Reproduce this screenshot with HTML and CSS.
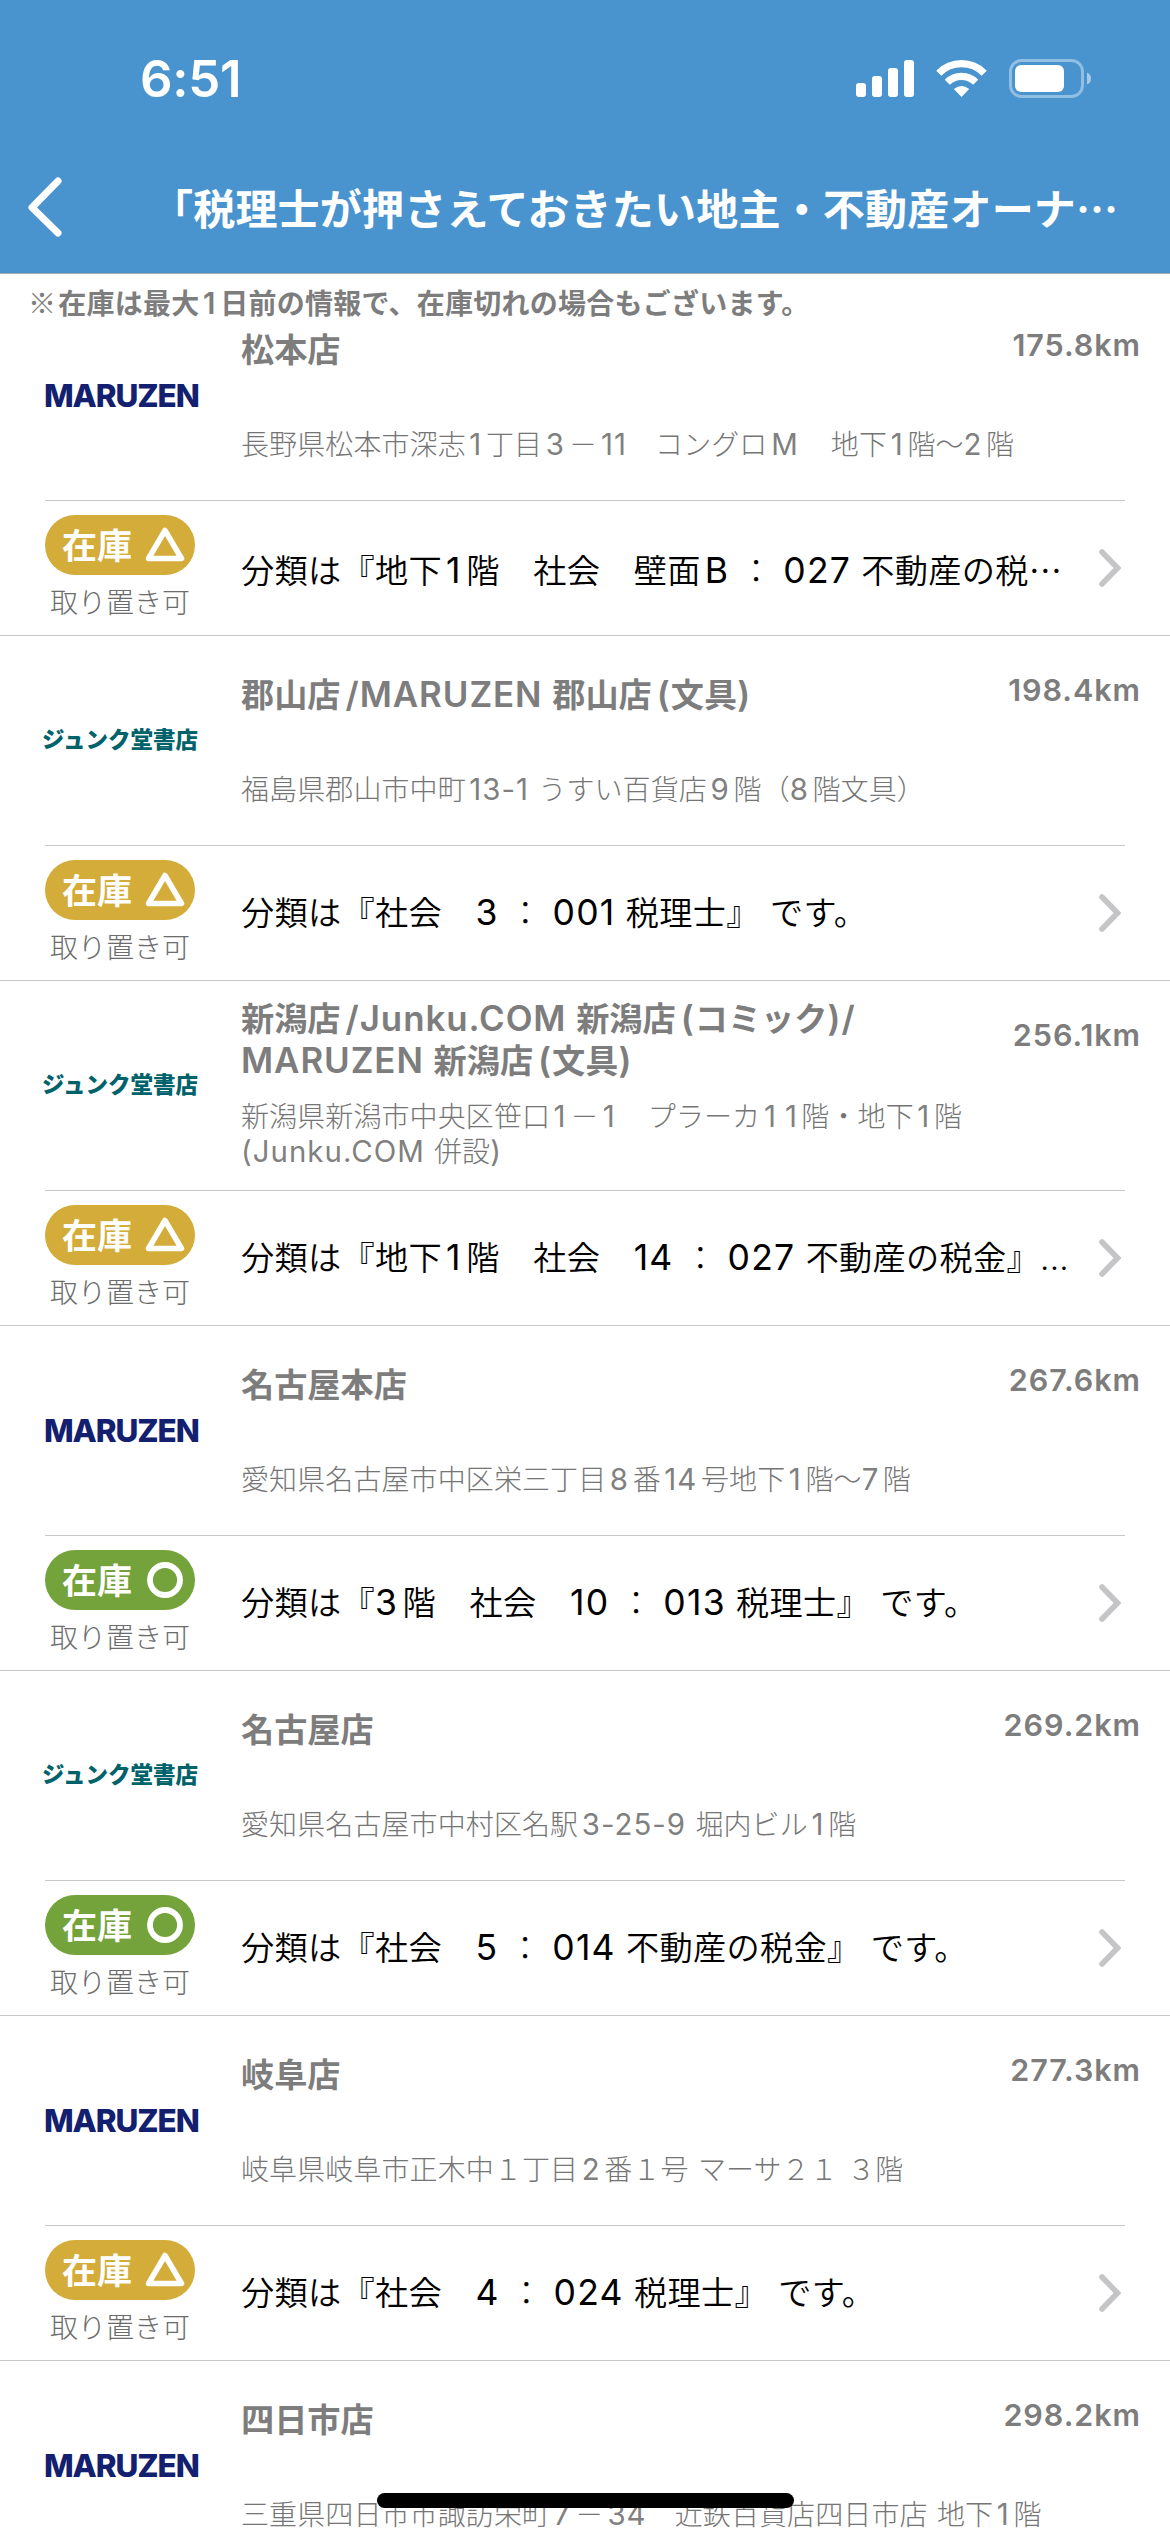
FILE: index.html
```html
<!DOCTYPE html>
<html lang="ja">
<head>
<meta charset="utf-8">
<title>在庫店舗一覧</title>
<link rel="stylesheet" href="styles.css">
</head>
<body>
<svg width="0" height="0" class="defs">
  <symbol id="next" viewBox="0 0 22 38"><path d="M3 3l15.500 16L3 35" fill="none" stroke="#c5c5c7" stroke-width="5.600" stroke-linecap="round" stroke-linejoin="miter"/></symbol>
  <symbol id="tri" viewBox="0 0 40 36"><path d="M20 3.500L36.500 31.500H3.500z" fill="none" stroke="#fff" stroke-width="5.500" stroke-linejoin="round"/></symbol>
  <symbol id="circ" viewBox="0 0 40 36"><circle cx="20" cy="18" r="15" fill="none" stroke="#fff" stroke-width="5.800"/></symbol>
</svg>
<header class="header">
  <div class="status">
    <span class="clock">6:51</span>
    <svg class="indicators" width="236" height="40" viewBox="0 0 236 40" fill="#fff">
      <rect x="0" y="24" width="10" height="14" rx="3"/><rect x="16" y="17" width="10" height="21" rx="3"/><rect x="32" y="9" width="10" height="29" rx="3"/><rect x="48" y="1" width="10" height="37" rx="3"/>
      <g fill="none" stroke="#fff" stroke-width="7.200"><path d="M82.800 14.200a31.800 31.800 0 0 1 45.400 0"/><path d="M91.300 23.300a20.200 20.200 0 0 1 28.400 0"/></g>
      <path d="M105.500 38l-7.700-8q7.700-6 15.400 0z"/>
      <rect x="154.500" y="1.500" width="72" height="36" rx="11" fill="none" stroke="#fff" stroke-opacity=".4" stroke-width="3"/>
      <rect x="159" y="6" width="49" height="27" rx="6"/>
      <path d="M231 13.500q4 1.500 4 6t-4 6z" fill-opacity=".5"/>
    </svg>
  </div>
  <div class="nav">
    <svg class="back" width="36" height="60" viewBox="0 0 36 60"><path d="M31 4L5 30.500L31 56" fill="none" stroke="#fff" stroke-width="7" stroke-linecap="round" stroke-linejoin="round"/></svg>
    <h1 class="title">「税理士が押さえておきたい地主・不動産オーナ<span class="dots">⋯</span></h1>
  </div>
</header>
<p class="note"><span class="kome">※</span>在庫は最大<span class="n">1</span>日前の情報で、在庫切れの場合もございます。</p>
<main class="list">
  <section class="store">
    <div class="info">
      <div class="logo maruzen">MARUZEN</div>
      <div class="texts"><div class="top"><h2 class="name">松本店</h2><span class="km">175.8km</span></div>
      <p class="address">長野県松本市深志<span class="n">1</span>丁目<span class="n">3</span><i></i>－<i></i><span class="n">11</span>　コングロ<span class="n">M</span><i></i>　地下<span class="n">1</span>階〜<span class="n">2</span>階</p></div>
    </div>
    <div class="stock">
      <div class="state"><div class="badge few"><span class="word">在庫</span><svg class="mark"><use href="#tri"/></svg></div><span class="keep">取り置き可</span></div>
      <p class="shelf">分類は『地下<span class="n">1</span>階　社会　壁面<span class="n">B </span><span class="colon">：</span><span class="n"> 027 </span>不動産の税<span class="dots">⋯</span></p><svg class="next"><use href="#next"/></svg>
    </div>
  </section>
  <section class="store">
    <div class="info">
      <div class="logo junku">ジュンク堂書店</div>
      <div class="texts"><div class="top"><h2 class="name">郡山店<i></i><span class="n">/MARUZEN </span>郡山店<i></i><span class="n">(</span>文具<span class="n">)</span></h2><span class="km">198.4km</span></div>
      <p class="address">福島県郡山市中町<span class="n">13-1 </span>うすい百貨店<span class="n">9</span>階（<span class="n">8</span>階文具）</p></div>
    </div>
    <div class="stock">
      <div class="state"><div class="badge few"><span class="word">在庫</span><svg class="mark"><use href="#tri"/></svg></div><span class="keep">取り置き可</span></div>
      <p class="shelf">分類は『社会　<span class="n">3 </span><span class="colon">：</span><span class="n"> 001 </span>税理士』<span class="n"> </span>です。</p><svg class="next"><use href="#next"/></svg>
    </div>
  </section>
  <section class="store double">
    <div class="info">
      <div class="logo junku">ジュンク堂書店</div>
      <div class="texts"><div class="top"><h2 class="name">新潟店<i></i><span class="n">/Junku.COM </span>新潟店<i></i><span class="n">(</span>コミック<span class="n">)/</span><br><span class="n">MARUZEN </span>新潟店<i></i><span class="n">(</span>文具<span class="n">)</span></h2><span class="km">256.1km</span></div>
      <p class="address">新潟県新潟市中央区笹口<span class="n">1</span><i></i>－<i></i><span class="n">1</span><i></i>　プラーカ<span class="n">1<i></i><i></i>1</span>階・地下<span class="n">1</span>階<br><span class="n">(Junku.COM </span>併設<span class="n">)</span></p></div>
    </div>
    <div class="stock">
      <div class="state"><div class="badge few"><span class="word">在庫</span><svg class="mark"><use href="#tri"/></svg></div><span class="keep">取り置き可</span></div>
      <p class="shelf">分類は『地下<span class="n">1</span>階　社会　<span class="n">14 </span><span class="colon">：</span><span class="n"> 027 </span>不動産の税金』...</p><svg class="next"><use href="#next"/></svg>
    </div>
  </section>
  <section class="store">
    <div class="info">
      <div class="logo maruzen">MARUZEN</div>
      <div class="texts"><div class="top"><h2 class="name">名古屋本店</h2><span class="km">267.6km</span></div>
      <p class="address">愛知県名古屋市中区栄三丁目<span class="n">8</span>番<span class="n">14</span>号地下<span class="n">1</span>階〜<span class="n">7</span>階</p></div>
    </div>
    <div class="stock">
      <div class="state"><div class="badge many"><span class="word">在庫</span><svg class="mark"><use href="#circ"/></svg></div><span class="keep">取り置き可</span></div>
      <p class="shelf">分類は『<span class="n">3</span>階　社会　<span class="n">10 </span><span class="colon">：</span><span class="n"> 013 </span>税理士』<span class="n"> </span>です。</p><svg class="next"><use href="#next"/></svg>
    </div>
  </section>
  <section class="store">
    <div class="info">
      <div class="logo junku">ジュンク堂書店</div>
      <div class="texts"><div class="top"><h2 class="name">名古屋店</h2><span class="km">269.2km</span></div>
      <p class="address">愛知県名古屋市中村区名駅<span class="n">3-25-9 </span>堀内ビル<span class="n">1</span>階</p></div>
    </div>
    <div class="stock">
      <div class="state"><div class="badge many"><span class="word">在庫</span><svg class="mark"><use href="#circ"/></svg></div><span class="keep">取り置き可</span></div>
      <p class="shelf">分類は『社会　<span class="n">5 </span><span class="colon">：</span><span class="n"> 014 </span>不動産の税金』<span class="n"> </span>です。</p><svg class="next"><use href="#next"/></svg>
    </div>
  </section>
  <section class="store">
    <div class="info">
      <div class="logo maruzen">MARUZEN</div>
      <div class="texts"><div class="top"><h2 class="name">岐阜店</h2><span class="km">277.3km</span></div>
      <p class="address">岐阜県岐阜市正木中１丁目<span class="n">2</span>番１号<span class="n"> </span>マーサ２１<span class="n"> </span>３階</p></div>
    </div>
    <div class="stock">
      <div class="state"><div class="badge few"><span class="word">在庫</span><svg class="mark"><use href="#tri"/></svg></div><span class="keep">取り置き可</span></div>
      <p class="shelf">分類は『社会　<span class="n">4 </span><span class="colon">：</span><span class="n"> 024 </span>税理士』<span class="n"> </span>です。</p><svg class="next"><use href="#next"/></svg>
    </div>
  </section>
  <section class="store">
    <div class="info">
      <div class="logo maruzen">MARUZEN</div>
      <div class="texts"><div class="top"><h2 class="name">四日市店</h2><span class="km">298.2km</span></div>
      <p class="address">三重県四日市市諏訪栄町<span class="n">7</span><i></i>－<i></i><span class="n">34</span>　近鉄百貨店四日市店<span class="n"> </span>地下<span class="n">1</span>階</p></div>
    </div>
  </section>
</main>
<div class="home-bar"></div>
</body>
</html>
```
FILE: styles.css
```css
* { box-sizing: border-box; }
body {
  margin: 0;
  width: 1170px;
  height: 2532px;
  overflow: hidden;
  display: flex;
  flex-direction: column;
  background: #fff;
  font-family: Inter, "Noto Sans CJK JP", sans-serif;
  color: #7d7d7d;
  text-autospace: normal;
}
h1, h2, p { margin: 0; white-space: nowrap; }
i { display: inline-block; width: 4px; }
.n { font-size: 1.05em; letter-spacing: 0.035em; line-height: 0; }
.defs { position: absolute; }

.header {
  flex: none;
  height: 274px;
  background: #4994cf;
  border-bottom: 1px solid #a5adb3;
  color: #fff;
}
.status {
  height: 157px;
  padding: 0 78px 0 140px;
  display: flex;
  justify-content: space-between;
  align-items: center;
}
.clock { font-size: 51px; font-weight: 600; line-height: 60px; letter-spacing: -0.3px; }
.nav { height: 99px; display: flex; align-items: center; padding-left: 27px; }
.title {
  margin-left: 88px;
  padding-top: 4px;
  font-size: 42px;
  font-weight: 700;
  line-height: 60px;
  letter-spacing: 0.2px;
}
.dots { font-family: "Noto Sans CJK JP", sans-serif; }

.note {
  position: relative;
  z-index: 1;
  flex: none;
  height: 57px;
  padding: 0 28px;
  background: #fff;
  font-size: 28px;
  font-weight: 600;
  line-height: 57px;
  letter-spacing: 0.25px;
}
.kome { font-family: "Noto Sans CJK JP", sans-serif; font-weight: 400; margin-right: 2px; }

.list { flex: 1; min-height: 0; margin-top: -40px; overflow: hidden; }
.store { height: 345px; border-bottom: 1px solid #c8c7cc; }
.info {
  height: 210px;
  margin: 0 45px;
  border-bottom: 1px solid #c8c7cc;
  display: flex;
}
.logo { flex: none; width: 196px; padding-top: 82px; line-height: 46px; white-space: nowrap; }
.maruzen { color: #12206f; font-size: 31.500px; font-weight: 800; letter-spacing: -1.100px; text-indent: -1px; }
.junku { color: #00626a; font-family: "Noto Sans CJK JP", sans-serif; font-size: 22.500px; font-weight: 900; text-indent: -3px; padding-top: 79px; }
.texts { flex: 1; min-width: 0; }
.top { height: 117px; display: flex; justify-content: space-between; align-items: center; margin-right: -15px; }
.name { font-size: 33.200px; font-weight: 600; line-height: 42px; }
.name .n { letter-spacing: 0.027em; }
.name i { width: 5px; }
.km { font-size: 30.500px; font-weight: 600; line-height: 40px; padding-bottom: 10px; letter-spacing: 0.950px; margin-right: -1px; }
.address { padding-top: 20px; font-size: 28px; font-weight: 300; line-height: 35px; letter-spacing: 0.100px; color: #757575; }
.double .address { padding-top: 2px; }
.address .n { font-weight: 400; color: #808080; }

.stock { height: 134px; display: flex; padding: 14px 49px 0 45px; }
.state { width: 150px; margin-right: 46px; display: flex; flex-direction: column; align-items: center; }
.badge {
  width: 150px;
  height: 60px;
  border-radius: 30px;
  padding: 0 10px 0 17px;
  display: flex;
  align-items: center;
  justify-content: space-between;
  color: #fff;
  font-size: 35px;
  font-weight: 700;
}
.word { margin-top: -4px; }
.few { background: #d4ac39; }
.many { background: #74a23b; }
.mark { width: 40px; height: 36px; }
.keep { font-size: 28px; font-weight: 300; line-height: 40px; margin-top: 8px; color: #6c6c6c; }
.shelf { flex: 1; font-size: 33.200px; font-weight: 350; line-height: 107px; letter-spacing: 0.300px; color: #000; }
.shelf .n { font-size: 1.070em; letter-spacing: 0.035em; word-spacing: -1px; font-weight: 400; }
.colon { font-weight: 300; }
.next { width: 22px; height: 38px; margin-top: 34px; }

.home-bar {
  position: absolute;
  left: 377px;
  top: 2493px;
  width: 417px;
  height: 15px;
  border-radius: 8px;
  background: #000;
}
```
